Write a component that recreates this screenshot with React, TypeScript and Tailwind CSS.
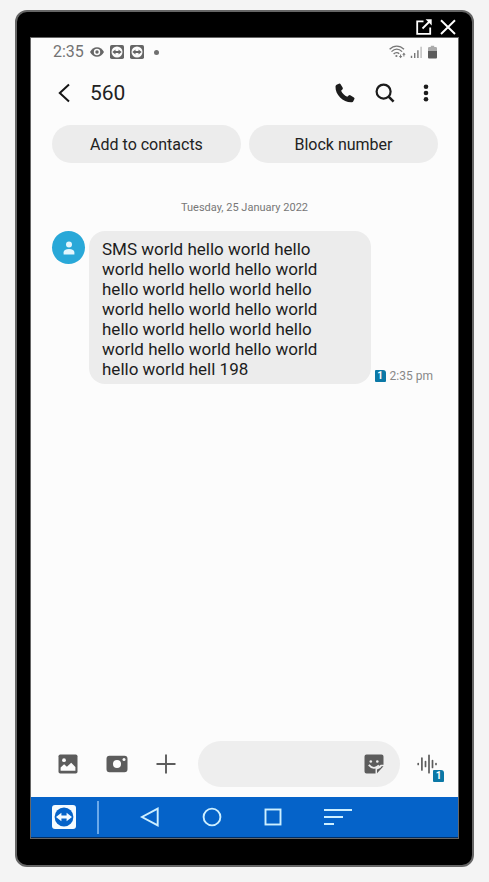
import type { ReactNode } from "react";

type IconProps = { className?: string };

const MESSAGE =
  "SMS world hello world hello world hello world hello world hello world hello world hello world hello world hello world hello world hello world hello world hello world hello world hello world hell 198";

function PopOutIcon() {
  return (
    <svg className="size-4" viewBox="0 0 16 16" fill="none" stroke="#fff" strokeWidth="1.8" aria-hidden="true">
      <path d="M7.500 2.400H1.200v12.500h13V8.500" />
      <path d="M6.500 9.500 14 2" />
      <path d="M9.600.3h6.100v6.100z" fill="#fff" stroke="none" />
    </svg>
  );
}

function CloseIcon() {
  return (
    <svg className="size-4" viewBox="0 0 16 16" fill="none" stroke="#fff" strokeWidth="1.900" aria-hidden="true">
      <path d="m1 1.200 14 13.800M15 1.200 1 15" />
    </svg>
  );
}

function EyeIcon() {
  return (
    <svg className="h-3 w-3.5" viewBox="0 0 14 12" aria-hidden="true">
      <path d="M0 6C1.600 3 4 1.200 7 1.200S12.400 3 14 6c-1.600 3-4 4.800-7 4.800S1.600 9 0 6z" fill="#666" />
      <circle cx="7" cy="6" r="3.200" fill="#fcfcfc" />
      <circle cx="7" cy="6" r="1.700" fill="#666" />
    </svg>
  );
}

function RemoteIcon({ className, box, disc, arrow }: IconProps & { box: string; disc: string; arrow: string }) {
  return (
    <svg className={className} viewBox="0 0 24 24" aria-hidden="true">
      <rect width="24" height="24" rx="3" fill={box} />
      <circle cx="12" cy="12" r="9.400" fill={disc} />
      <path d="M4 12l5.400-4.300v2.700h5.200V7.700L20 12l-5.400 4.300v-2.700H9.400v2.700z" fill={arrow} />
    </svg>
  );
}

function WifiIcon() {
  return (
    <svg className="h-3.5 w-[17px]" viewBox="0 0 17 14" fill="none" stroke="#777" strokeWidth="1.300" aria-hidden="true">
      <path d="M.6 4.300c4.300-4.300 10.100-4.300 14.400 0M2.500 6.600c3.200-3.200 7.400-3.200 10.600 0M4.600 9c1.900-1.900 4.100-1.900 5.600-.3" />
      <circle cx="7.400" cy="11" r="1.100" fill="#777" stroke="none" />
      <path d="M11.600 9.500v2.500M14.900 9v2.500" strokeWidth="1" />
      <path d="M9.900 11h3.400l-1.700 2.300zM13.200 9.800h3.400l-1.700-2.300z" fill="#777" stroke="none" />
    </svg>
  );
}

function SignalIcon() {
  return (
    <svg className="h-3 w-3" viewBox="0 0 12 12" strokeWidth="1.400" aria-hidden="true">
      <path d="M1.500 12v-2.300M4.700 12V7M7.900 12V4.200" stroke="#777" />
      <path d="M11.100 12V.8" stroke="#bbb" />
    </svg>
  );
}

function BatteryIcon() {
  return (
    <svg className="h-3.5 w-[9px]" viewBox="0 0 9 14" aria-hidden="true">
      <path d="M0 5V3.200Q0 2 1.300 2h1.500V.800h3.400V2h1.500Q9 2 9 3.200V6H0z" fill="#aaa" />
      <path d="M0 6h9v6.500q0 .900-1 .900H1q-1 0-1-.900z" fill="#5c5c5c" />
    </svg>
  );
}

function BackIcon() {
  return (
    <svg className="h-5 w-3" viewBox="0 0 12 20" fill="none" stroke="#151515" strokeWidth="2" aria-hidden="true">
      <path d="M11 1.500 1.800 10l9.200 8.500" />
    </svg>
  );
}

function PhoneIcon() {
  return (
    <svg className="size-5" viewBox="0 0 20 20" fill="#1c1c1c" aria-hidden="true">
      <path d="M1.600 1.800 3.900.700q1.100-.5 1.700.5l2 3.200q.7 1.200-.2 2L6.100 7.700c1.300 2.700 3.300 4.700 6.200 6.100l1.300-1.200q1-.9 2.100-.2l3.200 2q1 .7.500 1.700l-1.100 2.200q-.4.900-1.400 1C8.500 19.800.1 11.900.5 3.500q.1-1.200 1.100-1.700z" />
    </svg>
  );
}

function SearchIcon() {
  return (
    <svg className="size-5" viewBox="0 0 20 20" fill="none" stroke="#1c1c1c" aria-hidden="true">
      <circle cx="8.600" cy="8.600" r="7" strokeWidth="2.200" />
      <path d="m13.600 13.600 5 5" strokeWidth="2.600" />
    </svg>
  );
}

function MoreIcon() {
  return (
    <svg className="h-[18px] w-1.5" viewBox="0 0 6 18" fill="#1c1c1c" aria-hidden="true">
      <circle cx="3" cy="2.700" r="2.300" />
      <circle cx="3" cy="9" r="2.300" />
      <circle cx="3" cy="15.300" r="2.300" />
    </svg>
  );
}

function PersonIcon() {
  return (
    <svg className="h-3.5 w-3" viewBox="0 0 12 14" fill="#e3f6fd" aria-hidden="true">
      <circle cx="6" cy="3.600" r="3" />
      <path d="M.6 13.600v-2.200c0-2.300 2-3.500 5.400-3.500s5.400 1.200 5.400 3.500v2.200z" />
    </svg>
  );
}

function SimBadge({ className = "" }: IconProps) {
  return (
    <span
      className={
        "flex h-3 w-[11px] items-center justify-center rounded-[1px] rounded-tr-[3px] bg-[#0b78a6] text-[10px] leading-none font-bold text-white " +
        className
      }
    >
      1
    </span>
  );
}

function ImageIcon() {
  return (
    <svg className="size-5" viewBox="0 0 20 20" aria-hidden="true">
      <rect x=".5" y=".5" width="19" height="19" rx="1.800" fill="#5c5c5c" />
      <circle cx="6" cy="6.200" r="1.900" fill="#fcfcfc" />
      <path d="M2.600 16.800v-3.300l3.500-3.200 2.800 2.500 4.300-4.100 4.200 4.300v3.800z" fill="#fcfcfc" />
    </svg>
  );
}

function CameraIcon() {
  return (
    <svg className="h-5 w-[22px]" viewBox="0 0 22 20" aria-hidden="true">
      <path d="M3.500 1.800h15q3 0 3 3v10.400q0 3-3 3h-15q-3 0-3-3V4.800q0-3 3-3z" fill="#5c5c5c" />
      <circle cx="11" cy="10" r="4" fill="#fcfcfc" />
      <circle cx="18" cy="5.400" r="1.500" fill="#fcfcfc" />
    </svg>
  );
}

function PlusIcon() {
  return (
    <svg className="size-5" viewBox="0 0 20 20" stroke="#5c5c5c" strokeWidth="1.900" aria-hidden="true">
      <path d="M10 .5v19M.5 10h19" />
    </svg>
  );
}

function StickerIcon() {
  return (
    <svg className="size-5" viewBox="0 0 20 20" aria-hidden="true">
      <path d="M2.500.500h15q2 0 2 2v8.200h-2.800q-2.500 2.600-5.200 3.100v5.700H2.500q-2 0-2-2v-15q0-2 2-2z" fill="#5c5c5c" />
      <path d="M13 19.300v-3.800q3.600-.7 4.700-3.300h1.800z" fill="#5c5c5c" />
      <circle cx="6.800" cy="7.500" r="1.300" fill="#eee" />
      <circle cx="13.300" cy="7.500" r="1.300" fill="#eee" />
      <path d="M4.800 10.900q4.800 5.600 10.200.6" fill="none" stroke="#eee" strokeWidth="1.900" />
    </svg>
  );
}

function VoiceIcon() {
  return (
    <svg className="size-5" viewBox="0 0 20 20" stroke="#5c5c5c" strokeWidth="1.700" strokeLinecap="round" aria-hidden="true">
      <path d="M1.200 9.500v1M4.900 4v12M8.500 7.500v5M12 1.300v17.400M15.500 6.500v7M19 9.500v1" />
    </svg>
  );
}

function IconButton({ label, className = "", children }: { label: string; className?: string; children: ReactNode }) {
  return (
    <button type="button" aria-label={label} className={"flex shrink-0 items-center justify-center " + className}>
      {children}
    </button>
  );
}

function StatusBar() {
  return (
    <div className="flex h-7 items-center justify-between pr-[21px] pl-[22px]">
      <div className="flex items-center text-[#737373]">
        <span className="text-[16px] leading-5">2:35</span>
        <div className="ml-1.5 flex items-center gap-1.5">
          <EyeIcon />
          <RemoteIcon className="size-3.5" box="#666" disc="#fcfcfc" arrow="#666" />
          <RemoteIcon className="size-3.5" box="#666" disc="#fcfcfc" arrow="#666" />
        </div>
        <span className="ml-2.5 size-[5px] rounded-full bg-[#707070]" />
      </div>
      <div className="flex items-center">
        <WifiIcon />
        <span className="ml-1">
          <SignalIcon />
        </span>
        <span className="ml-1.5">
          <BatteryIcon />
        </span>
      </div>
    </div>
  );
}

function ChatHeader() {
  return (
    <header className="flex h-[54px] items-center pr-[29px] pl-[27px]">
      <IconButton label="Back">
        <BackIcon />
      </IconButton>
      <h1 className="ml-5 flex-1 text-[21px] leading-6 text-[#222]">560</h1>
      <div className="flex items-center">
        <IconButton label="Call">
          <PhoneIcon />
        </IconButton>
        <IconButton label="Search" className="ml-5">
          <SearchIcon />
        </IconButton>
        <IconButton label="More options" className="ml-7">
          <MoreIcon />
        </IconButton>
      </div>
    </header>
  );
}

function Composer() {
  return (
    <form className="mb-[10px] flex items-center pr-[21px] pl-[27px]" onSubmit={(e) => e.preventDefault()}>
      <div className="flex items-center gap-7">
        <IconButton label="Gallery">
          <ImageIcon />
        </IconButton>
        <IconButton label="Camera">
          <CameraIcon />
        </IconButton>
        <IconButton label="Add">
          <PlusIcon />
        </IconButton>
      </div>
      <div className="ml-[22px] flex h-[46px] min-w-0 flex-1 items-center rounded-full bg-[#eee] px-4">
        <input type="text" aria-label="Message" className="min-w-0 flex-1 bg-transparent text-[16px] outline-none" />
        <IconButton label="Stickers">
          <StickerIcon />
        </IconButton>
      </div>
      <IconButton label="Voice message, SIM 1" className="relative ml-[17px]">
        <VoiceIcon />
        <SimBadge className="absolute -right-[7px] -bottom-2" />
      </IconButton>
    </form>
  );
}

function NavBar() {
  return (
    <nav className="flex h-10 items-center bg-[#0563c9] pl-[21px]">
      <IconButton label="Remote control">
        <RemoteIcon className="size-6" box="#f4fbff" disc="#0563c9" arrow="#f4fbff" />
      </IconButton>
      <span className="ml-[21px] h-[33px] w-0.5 bg-[#6ba9ea]" />
      <IconButton label="Back" className="ml-[41px]">
        <svg className="size-5" viewBox="0 0 20 20" fill="none" stroke="#cdefff" strokeWidth="1.900" aria-hidden="true">
          <path d="M17.700 1.600v16.800L2 10z" />
        </svg>
      </IconButton>
      <IconButton label="Home" className="ml-[42px]">
        <svg className="size-5" viewBox="0 0 20 20" fill="none" stroke="#cdefff" strokeWidth="1.900" aria-hidden="true">
          <circle cx="10" cy="10" r="8.400" />
        </svg>
      </IconButton>
      <IconButton label="Recent apps" className="ml-[41px]">
        <svg className="size-5" viewBox="0 0 20 20" fill="none" stroke="#cdefff" strokeWidth="1.900" aria-hidden="true">
          <rect x="2.500" y="2.500" width="15" height="15" />
        </svg>
      </IconButton>
      <IconButton label="Menu" className="ml-[41px]">
        <svg className="h-5 w-7" viewBox="0 0 28 20" stroke="#cdefff" strokeWidth="2" aria-hidden="true">
          <path d="M0 3h28M0 10h19M0 17h10" />
        </svg>
      </IconButton>
    </nav>
  );
}

export default function App() {
  return (
    <div className="flex min-h-screen flex-col bg-[#f4f4f4] px-[15px] pt-[10px] pb-[15px] font-[Roboto,sans-serif]">
      <div className="flex flex-1 flex-col rounded-xl border-2 border-[#666] bg-black px-[13px] pb-[26px]">
        <div className="flex h-[25px] items-center justify-end gap-2 pt-1 pr-[3px]">
          <IconButton label="Open in new window">
            <PopOutIcon />
          </IconButton>
          <IconButton label="Close">
            <CloseIcon />
          </IconButton>
        </div>

        <div className="flex flex-1 flex-col border border-[#666] bg-[#fcfcfc]">
          <StatusBar />
          <ChatHeader />

          <div className="mt-[5px] flex gap-2 pr-5 pl-[21px]">
            <button type="button" className="h-[38px] flex-1 rounded-full bg-[#ececec] pt-0.5 text-[16px] text-[#222]">
              Add to contacts
            </button>
            <button type="button" className="h-[38px] flex-1 rounded-full bg-[#ececec] pt-0.5 text-[16px] text-[#222]">
              Block number
            </button>
          </div>

          <main className="flex-1">
            <p className="mt-[37px] text-center text-[11px] leading-4 text-[#777]">Tuesday, 25 January 2022</p>
            <div className="mt-[15px] flex items-start pr-[25px] pl-[21px]">
              <div className="flex size-[33px] shrink-0 items-center justify-center rounded-full bg-[#29a8d8]">
                <PersonIcon />
              </div>
              <p className="ml-1 flex-1 rounded-2xl bg-[#ececec] pt-2 pr-10 pb-[5px] pl-[13px] text-[17px] leading-5 text-[#1c1c1c]">
                {MESSAGE}
              </p>
              <div className="ml-1 flex items-center gap-1 self-end text-[12px] leading-4 text-[#888]">
                <SimBadge />
                <span>2:35 pm</span>
              </div>
            </div>
          </main>

          <Composer />
          <NavBar />
          <div className="h-px bg-[#032f63]" />
        </div>
      </div>
    </div>
  );
}
